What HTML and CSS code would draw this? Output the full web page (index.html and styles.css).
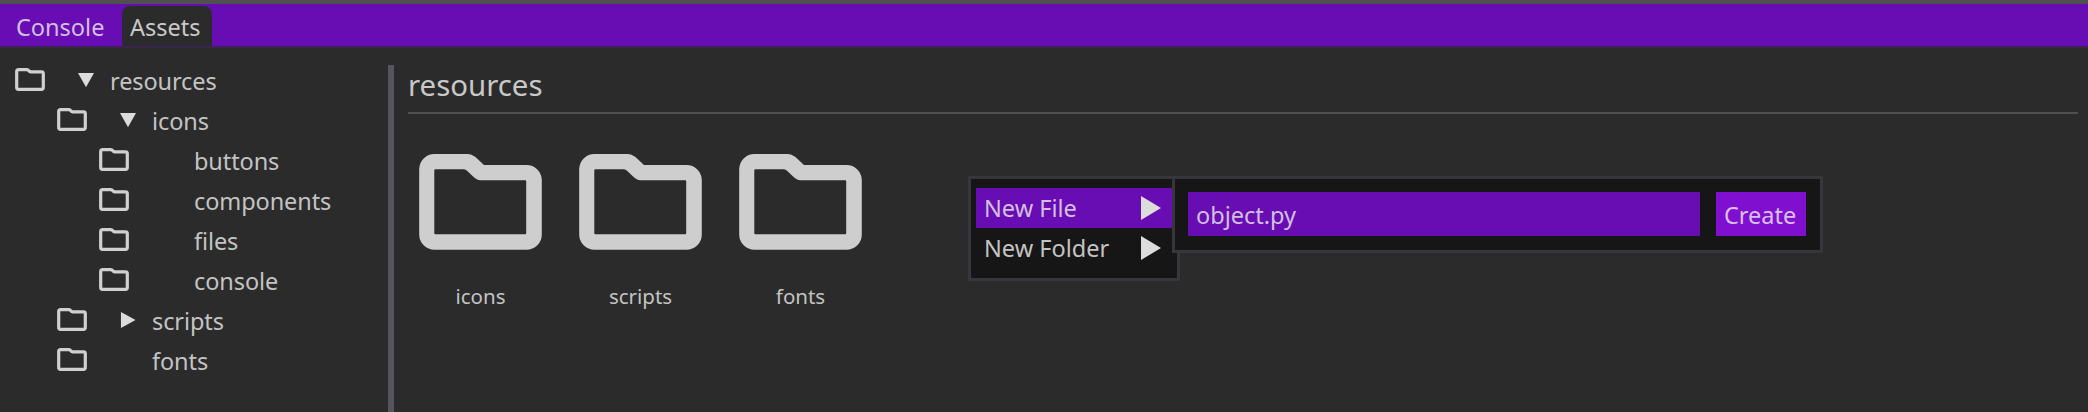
FILE: index.html
```
<!DOCTYPE html>
<html lang="en">
<head>
<meta charset="utf-8">
<title>Assets</title>
<link rel="stylesheet" href="styles.css">
</head>
<body>
<svg class="defs" width="0" height="0">
  <symbol id="folder-small" viewBox="0 0 30 23">
    <path d="M3.600 1.700H12Q13 1.700 13.800 2.700T15.800 3.800H26.500Q28.300 3.800 28.300 5.600V19.500Q28.300 21.300 26.500 21.300H3.500Q1.700 21.300 1.700 19.500V3.600Q1.700 1.700 3.600 1.700Z" fill="none" stroke="#d0d0d0" stroke-width="3.200"/>
  </symbol>
  <symbol id="folder-large" viewBox="0 0 123 96">
    <path fill="#cecece" fill-rule="evenodd" d="M15.500 0H47C52 0 54.500 1.500 57.500 4L65 11H107.500A15.300 15.300 0 0 1 122.800 26.300V80.500A15.300 15.300 0 0 1 107.500 95.800H15.500A15.300 15.300 0 0 1 .2 80.500V15.300A15.300 15.300 0 0 1 15.500 0ZM16.300 15.300Q15.300 15.300 15.300 16.300V79.200Q15.300 80.200 16.300 80.200H106.200Q107.200 80.200 107.200 79.200V27.300Q107.200 26.300 106.200 26.300H63C58 26.300 55.500 24 52.500 21L48 16.800Q46.500 15.300 45 15.300Z"/>
  </symbol>
</svg>
<div class="app">
  <nav class="tabs">
    <div class="tab">Console</div>
    <div class="tab tab-active">Assets</div>
  </nav>
  <div class="body">
    <aside class="tree">
      <div class="row"><svg class="icon"><use href="#folder-small"/></svg><span class="arrow down"></span><span>resources</span></div>
      <div class="row level1"><svg class="icon"><use href="#folder-small"/></svg><span class="arrow down"></span><span>icons</span></div>
      <div class="row level2"><svg class="icon"><use href="#folder-small"/></svg><span class="arrow"></span><span>buttons</span></div>
      <div class="row level2"><svg class="icon"><use href="#folder-small"/></svg><span class="arrow"></span><span>components</span></div>
      <div class="row level2"><svg class="icon"><use href="#folder-small"/></svg><span class="arrow"></span><span>files</span></div>
      <div class="row level2"><svg class="icon"><use href="#folder-small"/></svg><span class="arrow"></span><span>console</span></div>
      <div class="row level1"><svg class="icon"><use href="#folder-small"/></svg><span class="arrow right"></span><span>scripts</span></div>
      <div class="row level1"><svg class="icon"><use href="#folder-small"/></svg><span class="arrow"></span><span>fonts</span></div>
    </aside>
    <div class="splitter"></div>
    <main class="content">
      <h1 class="title">resources</h1>
      <div class="grid">
        <div class="item"><svg class="big"><use href="#folder-large"/></svg><span>icons</span></div>
        <div class="item"><svg class="big"><use href="#folder-large"/></svg><span>scripts</span></div>
        <div class="item"><svg class="big"><use href="#folder-large"/></svg><span>fonts</span></div>
      </div>
    </main>
  </div>
  <div class="popup menu">
    <div class="entry selected"><span>New File</span><span class="more"></span></div>
    <div class="entry"><span>New Folder</span><span class="more"></span></div>
  </div>
  <div class="popup submenu">
    <div class="field">object.py</div>
    <div class="button">Create</div>
  </div>
</div>
</body>
</html>
```
FILE: styles.css
```
* { box-sizing: border-box; }
body {
  margin: 0;
  background: #2b2b2b;
  color: #c3c3c3;
  font: 23.500px/40px "Noto Sans", sans-serif;
}
.defs { display: none; }
.app {
  position: relative;
  display: flex;
  flex-direction: column;
  height: 412px;
  overflow: hidden;
  border-top: 4px solid #505050;
}
.tabs {
  display: flex;
  gap: 10px;
  height: 44px;
  padding: 2px 0 0 10px;
  background: #680db3;
  border-bottom: 2px solid #3b2451;
}
.tab {
  height: 40px;
  padding: 1px 7px 0 6px;
  width: 102px;
  color: #d2bfe0;
}
.tab-active {
  width: 90px;
  padding-left: 8px;
  background: #2b2b2b;
  color: #c8c8c8;
  border-radius: 8px 8px 0 0;
}
.body {
  display: flex;
  flex: 1;
}
.tree {
  width: 388px;
  padding: 13px 0 0 15px;
}
.row {
  display: flex;
  height: 40px;
  letter-spacing: -0.1px;
}
.level1 { padding-left: 42px; }
.level2 { padding-left: 84px; }
.icon {
  width: 30px;
  height: 23px;
  margin: 7px 33px 0 0;
}
.arrow {
  width: 16px;
  height: 16px;
  margin: 11px 16px 0 0;
}
.down {
  background: #dcdcdc;
  clip-path: polygon(0 6%, 100% 6%, 50% 96%);
}
.right {
  background: #dcdcdc;
  clip-path: polygon(6% 0, 97% 50%, 6% 100%);
}
.splitter {
  width: 6px;
  margin-top: 17px;
  background: #55555f;
}
.content {
  flex: 1;
  padding: 13px 10px 0 14px;
}
.title {
  height: 53px;
  margin: 0;
  border-bottom: 2px solid #505050;
  color: #c8c8c8;
  font-size: 29.400px;
  font-weight: 400;
  line-height: 48px;
}
.grid {
  display: flex;
  gap: 37px;
  padding: 40px 0 0 11px;
}
.item {
  display: flex;
  flex-direction: column;
  align-items: center;
  gap: 26px;
  width: 123px;
  font-size: 20.500px;
}
.big {
  width: 123px;
  height: 96px;
}
.popup {
  position: absolute;
  border: 3px solid #37363c;
  background: #161616;
}
.menu {
  left: 968px;
  top: 172px;
  width: 212px;
  height: 105px;
  padding: 9px 5px;
}
.entry {
  display: flex;
  justify-content: space-between;
  height: 40px;
  padding: 0 11px 0 8px;
}
.selected {
  background: #680db3;
  color: #d2bfe0;
}
.more {
  width: 20px;
  height: 24px;
  margin-top: 8px;
  background: #dcdcdc;
  clip-path: polygon(0 0, 100% 50%, 0 100%);
}
.submenu {
  display: flex;
  gap: 16px;
  left: 1172px;
  top: 172px;
  width: 651px;
  height: 77px;
  padding: 13px;
}
.field, .button {
  height: 44px;
  padding: 3px 8px 0;
  background: #680db3;
  color: #d2bfe0;
}
.field { width: 512px; }
.button {
  width: 90px;
  background: #800fd0;
  color: #d8c0ea;
}
```
